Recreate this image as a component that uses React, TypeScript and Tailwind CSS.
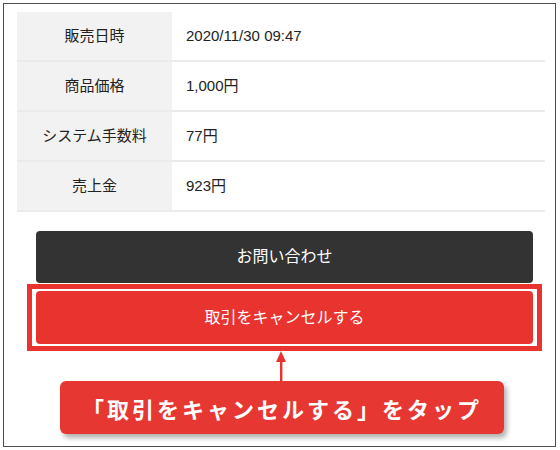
import React from "react";

const rows = [
  { label: "販売日時", value: "2020/11/30 09:47" },
  { label: "商品価格", value: "1,000円" },
  { label: "システム手数料", value: "77円" },
  { label: "売上金", value: "923円" },
];

export default function App() {
  return (
    <div
      className="w-[560px] h-[450px] bg-white p-[3px]"
      style={{ fontFamily: '"Liberation Sans", Arial, "Noto Sans CJK JP", sans-serif' }}
    >
      <div className="w-[553px] h-[444px] border border-[#4d4d4d] flex flex-col">
        {/* detail table */}
        <div className="mt-[8px] ml-[13px] w-[528px] flex flex-col">
          {rows.map((row, i) => (
            <div key={i} className="flex h-[50px] border-b-2 border-[#ebebeb]">
              <div className="w-[155px] bg-[#f2f2f2] flex items-center justify-center text-[15px] text-[#222]">
                {row.label}
              </div>
              <div className="flex-1 flex items-center pl-[14px] text-[15px] text-[#222]">
                {row.value}
              </div>
            </div>
          ))}
        </div>

        {/* buttons */}
        <div className="mt-[19px] ml-[32px] w-[497px] h-[52px] rounded-[4px] bg-[#333333] flex items-center justify-center text-white text-[16px]">
          お問い合わせ
        </div>
        <div className="mt-[1px] ml-[23px] w-[515px] border-[5px] border-[#e8332f] bg-white pt-[2px] pb-[2px] px-[4px]">
          <div className="h-[53px] rounded-[4px] bg-[#e8332f] flex items-center justify-center text-white text-[16px]">
            取引をキャンセルする
          </div>
        </div>

        {/* arrow */}
        <div className="flex justify-center ml-[2px]">
          <svg width="12" height="30" viewBox="0 0 12 30">
            <polygon points="6,0 11,11 1,11" fill="#e8332f" />
            <rect x="5" y="9" width="2.4" height="21" fill="#e8332f" />
          </svg>
        </div>

        {/* callout */}
        <div className="ml-[56px] w-[444px] h-[53px] rounded-[6px] bg-[#e73733] shadow-[3px_4px_5px_rgba(0,0,0,0.3)] flex items-center justify-center">
          <span
            className="text-white text-[22px] font-bold tracking-[3px] whitespace-nowrap leading-none"
            style={{ fontFamily: '"Noto Sans CJK JP", sans-serif' }}
          >
            「取引をキャンセルする」をタップ
          </span>
        </div>
      </div>
    </div>
  );
}
